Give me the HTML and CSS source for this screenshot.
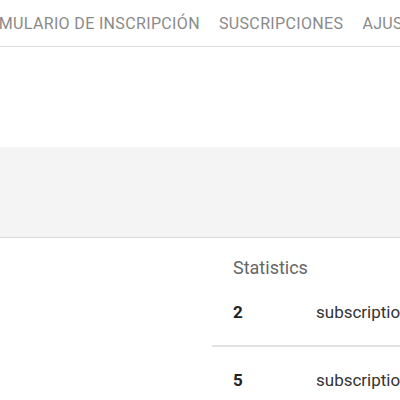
FILE: index.html
```html
<!DOCTYPE html>
<html lang="es">
<head>
<meta charset="utf-8">
<link rel="stylesheet" href="styles.css">
</head>
<body>
<nav class="nav">
  <span class="nav-item">Formulario de inscripción</span>
  <span class="nav-item">Suscripciones</span>
  <span class="nav-item">Ajustes</span>
</nav>
<div class="spacer"></div>
<div class="band"></div>
<div class="content">
  <div class="left"></div>
  <section class="stats">
    <h2 class="stats-title">Statistics</h2>
    <div class="row">
      <span class="num">2</span>
      <span class="label">subscriptions</span>
    </div>
    <div class="row">
      <span class="num">5</span>
      <span class="label">subscriptions</span>
    </div>
  </section>
</div>
</body>
</html>
```
FILE: styles.css
```css
html, body {
  margin: 0;
  padding: 0;
  background: #fff;
  overflow: hidden;
  font-family: Roboto, "Liberation Sans", sans-serif;
}
.nav {
  display: flex;
  align-items: center;
  gap: 19px;
  height: 46px;
  border-bottom: 1px solid #dcdcdc;
  white-space: nowrap;
  overflow: hidden;
}
.nav-item {
  font-size: 16px;
  letter-spacing: 0.35px;
  text-transform: uppercase;
  color: #8a8a8a;
  padding-top: 1px;
}
.nav-item:first-child {
  margin-left: -32px;
}
.spacer {
  height: 100px;
}
.band {
  height: 90px;
  background: #f4f4f4;
  border-bottom: 1px solid #dadada;
}
.content {
  display: grid;
  grid-template-columns: 212px 1fr;
}
.stats-title {
  margin: 19px 0 0 21px;
  font-size: 18px;
  line-height: 22px;
  font-weight: 400;
  color: #666;
}
.row {
  display: grid;
  grid-template-columns: 83px 1fr;
  align-items: center;
  height: 66px;
  padding-left: 21px;
  white-space: nowrap;
  overflow: hidden;
}
.row + .row {
  border-top: 1px solid #e3e3e3;
}
.row:first-of-type {
  border-bottom: 1px solid #e3e3e3;
}
.num {
  font-size: 17px;
  font-weight: 700;
  color: #222;
}
.label {
  font-size: 17px;
  color: #333;
}
```
